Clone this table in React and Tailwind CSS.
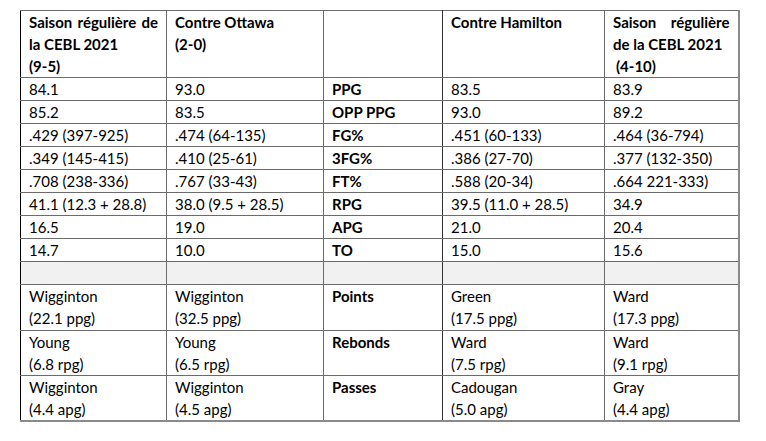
const HEAD = [
  ['Saison', 'régulière', 'de'],
  ['Contre Ottawa', '(2-0)'],
  [],
  ['Contre Hamilton'],
  ['Saison', 'régulière'],
]

const STATS = [
  ['84.1', '93.0', 'PPG', '83.5', '83.9'],
  ['85.2', '83.5', 'OPP PPG', '93.0', '89.2'],
  ['.429 (397-925)', '.474 (64-135)', 'FG%', '.451 (60-133)', '.464 (36-794)'],
  ['.349 (145-415)', '.410 (25-61)', '3FG%', '.386 (27-70)', '.377 (132-350)'],
  ['.708 (238-336)', '.767 (33-43)', 'FT%', '.588 (20-34)', '.664 221-333)'],
  ['41.1 (12.3 + 28.8)', '38.0 (9.5 + 28.5)', 'RPG', '39.5 (11.0 + 28.5)', '34.9'],
  ['16.5', '19.0', 'APG', '21.0', '20.4'],
  ['14.7', '10.0', 'TO', '15.0', '15.6'],
]

const LEADERS = [
  [['Wigginton', '(22.1 ppg)'], ['Wigginton', '(32.5 ppg)'], 'Points', ['Green', '(17.5 ppg)'], ['Ward', '(17.3 ppg)']],
  [['Young', '(6.8 rpg)'], ['Young', '(6.5 rpg)'], 'Rebonds', ['Ward', '(7.5 rpg)'], ['Ward', '(9.1 rpg)']],
  [['Wigginton', '(4.4 apg)'], ['Wigginton', '(4.5 apg)'], 'Passes', ['Cadougan', '(5.0 apg)'], ['Gray', '(4.4 apg)']],
]

const td = 'border border-[#6b6b6b] pl-2 pr-2 align-top'

export default function App() {
  return (
    <div className="w-[766px] h-[441px] bg-white pt-[10px] pl-[20px]" style={{ fontFamily: 'Lato, "Open Sans", sans-serif' }}>
      <table className="table-fixed border-collapse text-[15px] leading-[22px] text-black border-r-2 border-b-2 border-[#8a8a8a]">
        <colgroup>
          <col className="w-[146px]" />
          <col className="w-[157px]" />
          <col className="w-[119px]" />
          <col className="w-[162px]" />
          <col className="w-[134px]" />
        </colgroup>
        <tbody>
          {/* header */}
          <tr className="h-[67px] font-bold">
            <td className={td + ' border-l-black'}>
              <div className="flex justify-between">
                {HEAD[0].map((w) => <span key={w}>{w}</span>)}
              </div>
              <div>la CEBL 2021</div>
              <div>(9-5)</div>
            </td>
            <td className={td}>
              <div>Contre Ottawa</div>
              <div>(2-0)</div>
            </td>
            <td className={td + ' border-l-black border-r-[#333]'}></td>
            <td className={td}>Contre Hamilton</td>
            <td className={td}>
              <div className="flex justify-between">
                {HEAD[4].map((w) => <span key={w}>{w}</span>)}
              </div>
              <div>de la CEBL 2021</div>
              <div className="pl-[3px]">(4-10)</div>
            </td>
          </tr>

          {STATS.map((r, i) => (
            <tr key={i} className="h-[23px]">
              {r.map((c, j) => (
                <td
                  key={j}
                  className={[
                    td,
                    j === 2 ? 'font-bold border-l-black border-r-[#333]' : '',
                    j === 0 ? 'border-l-black' : '',
                  ].join(' ')}
                >
                  {c}
                </td>
              ))}
            </tr>
          ))}

          {/* spacer */}
          <tr className="h-[23px] bg-[#f1f1f1]">
            <td className={td + ' border-l-black'}></td>
            <td className={td}></td>
            <td className={td + ' border-l-black border-r-[#333]'}></td>
            <td className={td}></td>
            <td className={td}></td>
          </tr>

          {LEADERS.map((r, i) => (
            <tr key={i} className={i === 0 ? 'h-[46px]' : 'h-[45px]'}>
              {r.map((c, j) =>
                j === 2 ? (
                  <td key={j} className={td + ' font-bold border-l-black border-r-[#333]'}>{c}</td>
                ) : (
                  <td key={j} className={td + (j === 0 ? ' border-l-black' : '')}>
                    <div>{c[0]}</div>
                    <div>{c[1]}</div>
                  </td>
                )
              )}
            </tr>
          ))}
        </tbody>
      </table>
    </div>
  )
}
